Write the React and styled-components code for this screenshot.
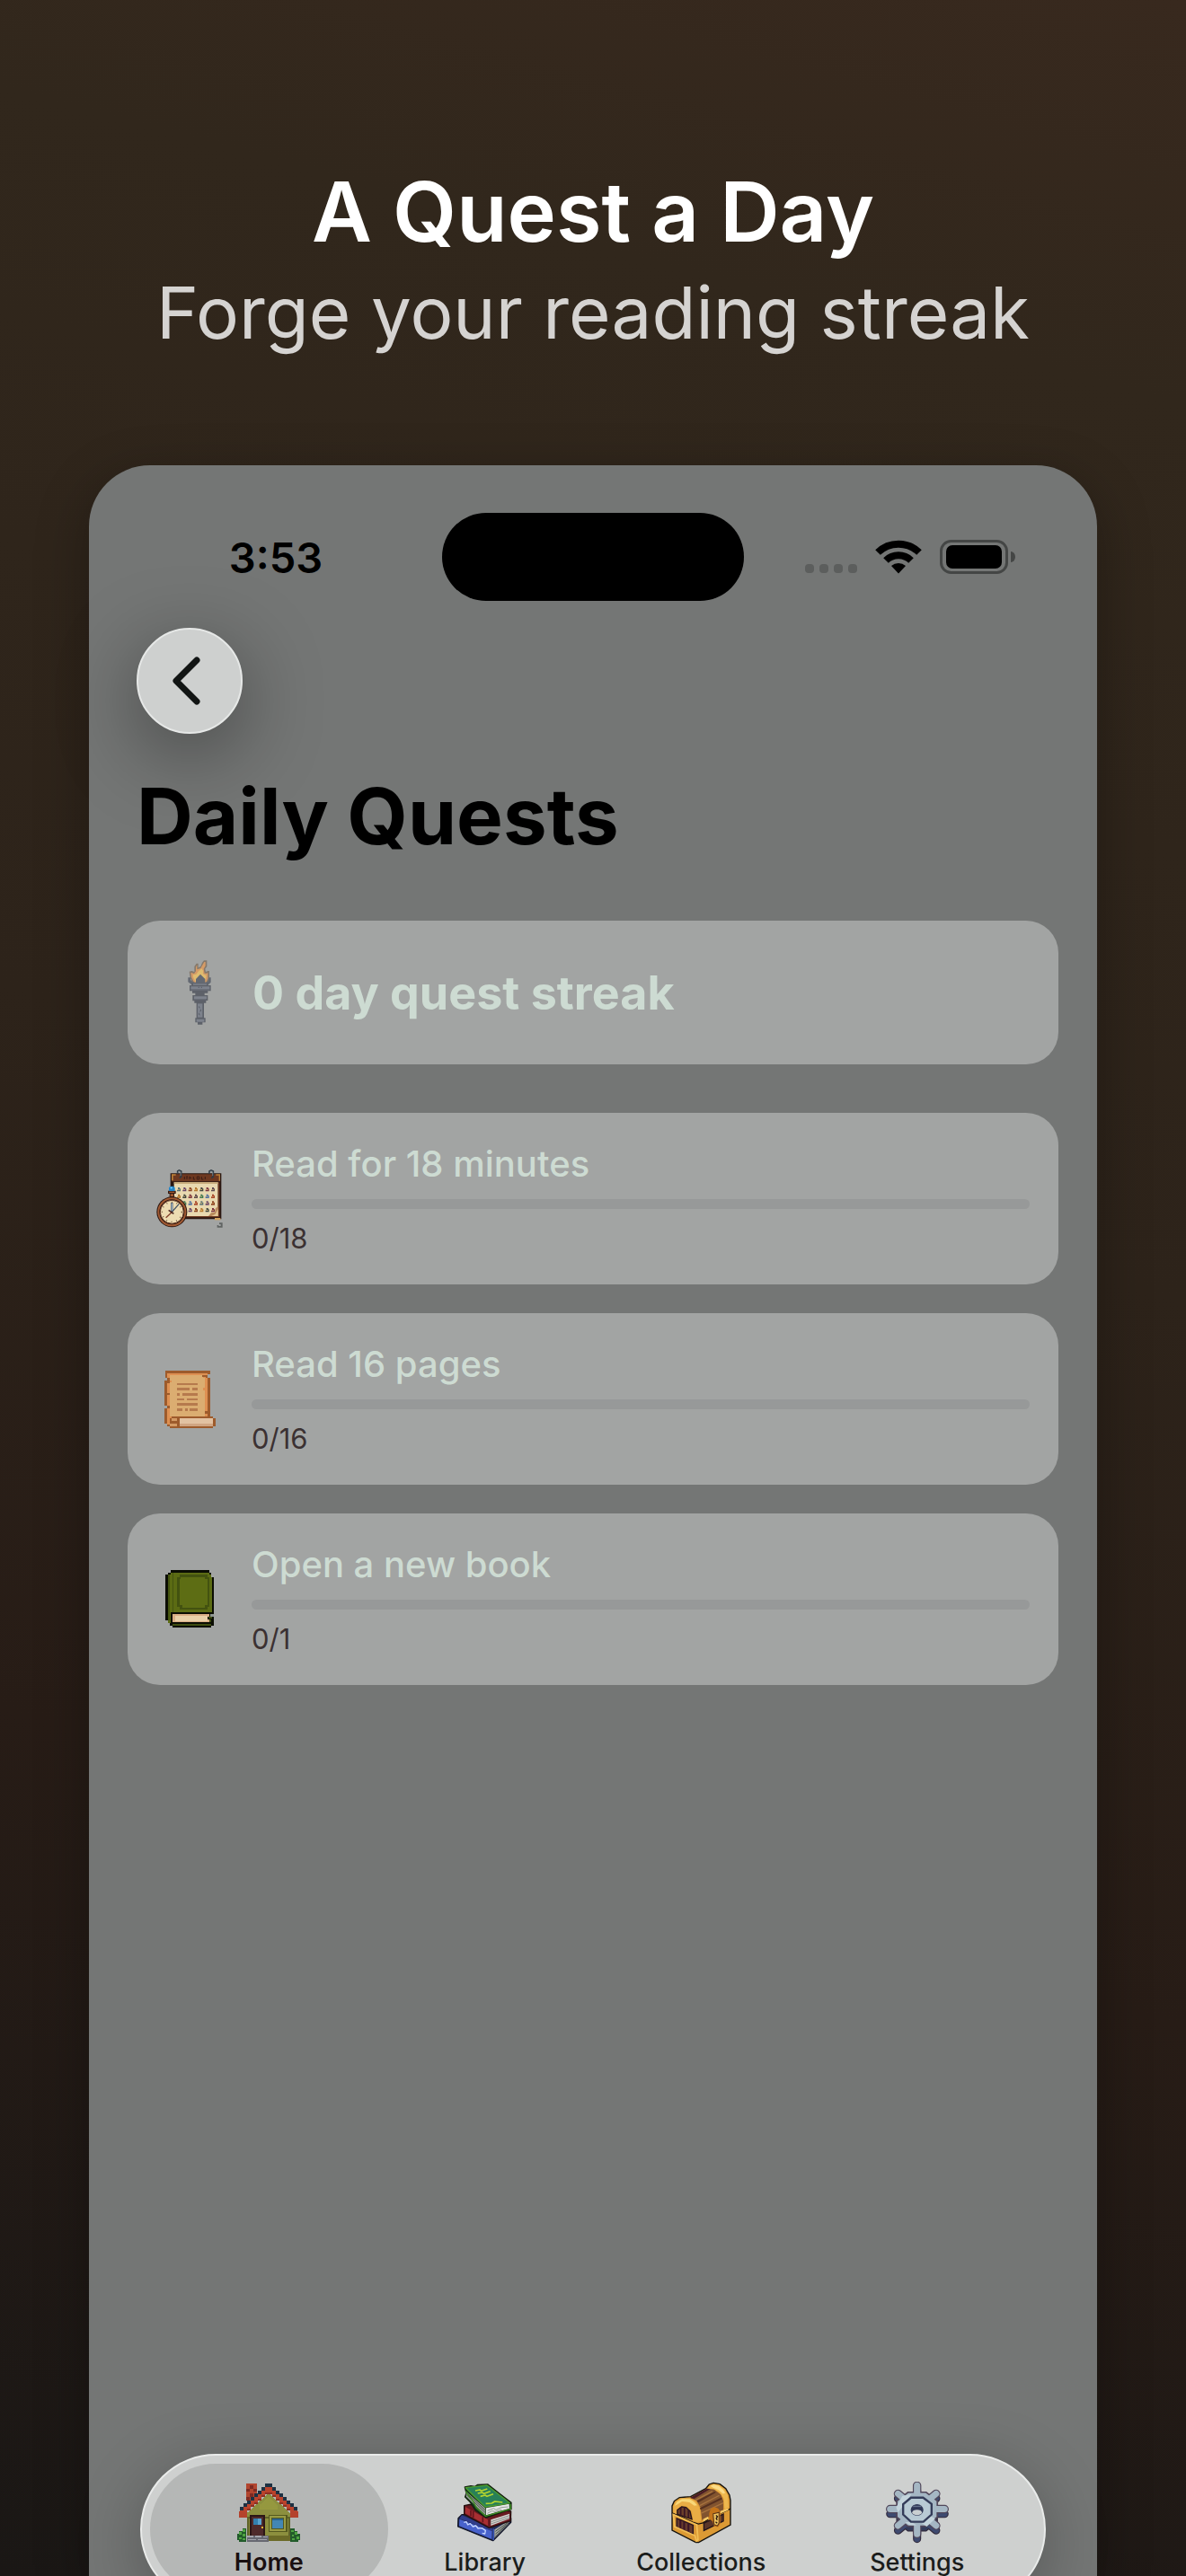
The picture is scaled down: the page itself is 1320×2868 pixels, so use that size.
import styled, { createGlobalStyle } from 'styled-components';

const quests = [
    { id: 'minutes', title: 'Read for 18 minutes', goal: 18, icon: CalendarIcon },
    { id: 'pages', title: 'Read 16 pages', goal: 16, icon: ScrollIcon },
    { id: 'book', title: 'Open a new book', goal: 1, icon: BookIcon },
];

const tabs = [
    { id: 'home', label: 'Home', icon: HouseIcon },
    { id: 'library', label: 'Library', icon: BooksIcon },
    { id: 'collections', label: 'Collections', icon: ChestIcon },
    { id: 'settings', label: 'Settings', icon: GearIcon },
];

const App = () => {
    return (
        <Page>
            <GlobalStyle />
            <Hero>
                <HeroTitle>A Quest a Day</HeroTitle>
                <HeroSubtitle>Forge your reading streak</HeroSubtitle>
            </Hero>
            <Phone>
                <StatusBar>
                    <Time>3:53</Time>
                    <Island />
                    <StatusIcons>
                        <SignalIcon />
                        <WifiIcon />
                        <BatteryIcon />
                    </StatusIcons>
                </StatusBar>
                <BackButton type="button" aria-label="Back">
                    <svg width="32" height="54" viewBox="0 0 32 54">
                        <path
                            d="M28 4 L5 27 L28 50"
                            fill="none"
                            stroke="#121514"
                            strokeWidth="7"
                            strokeLinecap="round"
                            strokeLinejoin="round"
                        />
                    </svg>
                </BackButton>
                <ScreenTitle>Daily Quests</ScreenTitle>
                <StreakCard>
                    <IconBox>
                        <TorchIcon />
                    </IconBox>
                    <StreakText>0 day quest streak</StreakText>
                </StreakCard>
                <QuestList>
                    {quests.map(({ id, title, goal, icon: Icon }) => (
                        <QuestCard key={id}>
                            <IconBox>
                                <Icon />
                            </IconBox>
                            <QuestBody>
                                <QuestTitle htmlFor={id}>{title}</QuestTitle>
                                <QuestProgress id={id} value={0} max={goal} />
                                <QuestCount>0/{goal}</QuestCount>
                            </QuestBody>
                        </QuestCard>
                    ))}
                </QuestList>
                <TabBar>
                    {tabs.map(({ id, label, icon: Icon }) => (
                        <Tab key={id} href={`#${id}`} $active={id === 'home'}>
                            <TabIcon>
                                <Icon />
                            </TabIcon>
                            {label}
                        </Tab>
                    ))}
                </TabBar>
            </Phone>
        </Page>
    );
};

export default App;

function SignalIcon() {
    return (
        <svg width="58" height="38" viewBox="0 0 58 38" fill="#5c5e5d">
            {[0, 16, 32, 48].map((x) => (
                <rect key={x} x={x} y="27" width="10" height="10" rx="4" />
            ))}
        </svg>
    );
}

function WifiIcon() {
    return (
        <svg width="52" height="38" viewBox="0 0 52 38">
            <g fill="none" stroke="#000" strokeWidth="8">
                <path d="M3 14 A33 33 0 0 1 49 14" />
                <path d="M12 23 A20 20 0 0 1 40 23" />
            </g>
            <path d="M18 29 A12 12 0 0 1 34 29 L26 37.500 Z" />
        </svg>
    );
}

function BatteryIcon() {
    return (
        <svg width="84" height="38" viewBox="0 0 84 38">
            <rect x="1.500" y="1.500" width="73" height="35" rx="11" fill="none" stroke="#444645" strokeWidth="3" />
            <rect x="7" y="6" width="62" height="26" rx="7" />
            <path d="M79 13 A5 6 0 0 1 79 25 Z" fill="#444645" />
        </svg>
    );
}

function TorchIcon() {
    return (
        <svg width="26" height="72" viewBox="83 59 78 216">
            <path
                d="M137 60 H147 V80 L141 88 L143 98 L150 95 H155 V120 L150 136 H100 L91 118 L88 97 L96 95 L105 98 V80 L112 70 H118 V84 L126 80 L131 67 Z"
                fill="#85796c"
            />
            <path
                d="M138 65 H142 V78 L136 88 L139 103 H146 L150 101 V120 L144 133 H104 L95 116 L93 100 L104 104 L110 96 V82 L114 75 V90 L126 86 L133 73 Z"
                fill="#d59b66"
            />
            <path d="M129 87 L134 94 V105 L145 111 L140 132 H109 L101 115 V108 L111 106 L119 96 Z" fill="#dfbc70" />
            <path d="M84 117 H92 V125 L100 132 L110 134 L110 122 L125 106 L141 122 V134 L151 130 L154 117 H160 V133 L150 142 H98 L84 132 Z" fill="#646972" />
            <path d="M96 136 H150 V143 H160 V162 H150 V169 H139 V176 H150 V194 H144 V202 H137 V252 H142 V267 H132 V274 H116 V267 H108 V252 H112 V202 H105 V195 H99 V176 H108 V169 H98 V162 H89 V143 H96 Z" fill="#5d6169" />
            <g fill="#7d828c">
                <path d="M101 138 H146 V142 H101 Z M93 147 H156 V157 H93 Z M104 180 H146 V188 H104 Z M112 256 H138 V265 H112 Z" />
                <path d="M116 204 H132 V250 H116 Z" />
            </g>
            <path d="M95 156 H154 V160 H95 Z M104 188 H145 V192 H104 Z" fill="#696e77" />
            <path d="M118 148 H122 V151 H118 Z M127 148 H131 V151 H127 Z M119 212 L123 216 V220 L119 216 Z M128 222 L124 228 V232 L128 228 Z M119 234 L123 240 V244 L119 240 Z" fill="#565b64" />
        </svg>
    );
}

function CalendarIcon() {
    const colors = ['#5d7476', '#68466b', '#8b4424', '#b57a33', '#3f4540', '#7a3340', '#5c4a52', '#3f7a55', '#4c6fa5', '#a8472f'];
    const cells = [];
    for (let row = 0; row < 4; row++) {
        for (let col = 0; col < 7; col++) {
            cells.push({ x: 114 + col * 19, y: 158 + row * 23, color: colors[(row * 3 + col) % colors.length] });
        }
    }

    return (
        <svg width="74" height="66" viewBox="45 98 222 198">
            <path d="M92 111 H262 V264 H130 V200 H92 Z" fill="#2a1712" />
            <path d="M96 114 H258 V138 H96 Z" fill="#6d3820" />
            <path d="M96 114 H110 V118 H101 V135 H96 Z M244 114 H258 V136 H254 V118 H244 Z" fill="#bb8038" />
            <path
                d="M139 122 V131 M145 122 H150 M147 122 V131 M156 131 V122 L162 128 M169 122 V131 H174 M181 122 H188 V131 H181 Z M196 122 V131 H202 M208 122 V131"
                fill="none"
                stroke="#3b1d16"
                strokeWidth="3"
            />
            <path d="M104 141 H251 V254 H104 Z" fill="#e9d9b0" />
            <path d="M251 141 H256 V258 H140 V254 H251 Z" fill="#6d3820" />
            <path d="M104 141 H251 V146 H104 Z" fill="#c9ab7a" />
            {cells.map((cell) => (
                <g key={`${cell.x}-${cell.y}`} fill={cell.color}>
                    <path d={`M${cell.x + 3} ${cell.y} h6 v4 h3 v9 h-12 v-5 h3 Z`} />
                    <path d={`M${cell.x + 4} ${cell.y + 6} h4 v3 h-4 Z`} fill="#e2b868" />
                </g>
            ))}
            <path d="M251 220 V254 H219 L228 243 L240 241 L242 229 Z" fill="#b98a5d" />
            <path d="M251 231 V254 H229 L242 247 Z" fill="#e3c797" />
            <path d="M240 260 H259 V267 H240 Z" fill="#d3a360" />
            <g fill="none" stroke="#303c45" strokeWidth="5">
                <path d="M116 112 V104 L121 101 L128 104 V122 L122 127" />
                <path d="M222 112 V104 L228 101 L235 104 V122 L229 127" />
            </g>
            <g fill="none" stroke="#8999a2" strokeWidth="2">
                <path d="M117 108 L121 103 L126 108 V119 M224 108 L228 103 L233 108 V119" />
            </g>
            <path d="M84 169 H110 V179 H105 V190 H89 V179 H84 Z" fill="#341b13" />
            <path d="M88 172 H106 V176 H88 Z M92 180 H102 V188 H92 Z" fill="#a1592f" />
            <path d="M92 154 H102 L107 159 V170 H87 V159 Z" fill="#2385c8" />
            <path d="M92 157 H98 V162 H92 Z" fill="#7ed3ff" />
            <circle cx="97" cy="240" r="51" fill="#2b1711" />
            <circle cx="97" cy="240" r="45" fill="none" stroke="#a25a32" strokeWidth="6" />
            <circle cx="97" cy="240" r="39" fill="#eddcb2" stroke="#5b2f1e" strokeWidth="3" />
            <circle cx="97" cy="240" r="33" fill="none" stroke="#6d5037" strokeWidth="4" strokeDasharray="3 14" />
            <path d="M97 240 V209" stroke="#45566a" strokeWidth="7" />
            <path d="M97 236 V211" stroke="#a9c2d3" strokeWidth="3" />
            <path d="M97 240 L121 213" stroke="#405061" strokeWidth="4" />
            <path d="M98 240 L77 259" stroke="#82402b" strokeWidth="4" />
            <path d="M86 234 L103 246" stroke="#4b2620" strokeWidth="5" />
            <path d="M255 276 H266 V292 H248 V284 H253 V287 H260 V281 H255 Z" fill="#606463" />
        </svg>
    );
}

function ScrollIcon() {
    return (
        <svg width="57" height="66" viewBox="67 106 171 198" shapeRendering="crispEdges">
            <path d="M69 108 H220 V122 H212 V132 H220 V262 H228 V268 H237 V294 H228 V302 H84 V294 H76 V286 H68 V236 H76 V226 H68 V141 H76 V132 H69 Z" fill="#9d5b2c" />
            <path d="M76 117 H212 V124 H204 V132 H212 V262 H92 V270 H84 V290 H76 V236 H84 V226 H76 V150 H84 V132 H76 Z" fill="#de9052" />
            <path d="M84 125 H195 V132 H203 V262 H84 V236 H84 V226 H84 V149 H92 V141 H84 Z" fill="#dbad71" />
            <path d="M194 124 H210 V131 H194 Z M76 183 H84 V191 H76 Z M203 244 H212 V252 H203 Z" fill="#9d5b2c" />
            <path d="M195 167 H203 V174 H195 Z" fill="#de9052" />
            <path
                d="M109 150 H177 V158 H109 Z M109 167 H152 V175 H109 Z M160 167 H177 V175 H160 Z M109 184 H118 V192 H109 Z M126 184 H177 V192 H126 Z M109 201 H134 V209 H109 Z M143 201 H177 V209 H143 Z M109 218 H177 V226 H109 Z M109 235 H127 V243 H109 Z M135 235 H144 V243 H135 Z M152 235 H177 V243 H152 Z"
                fill="#b67a4d"
            />
            <path d="M92 261 H228 V268 H118 V294 H110 V286 H92 V278 H84 V268 H92 Z" fill="#9d5b2c" />
            <path d="M92 269 H109 V277 H92 Z M84 286 H109 V294 H84 Z" fill="#d39a64" />
            <path d="M118 268 H229 V294 H118 Z" fill="#e2c2a2" />
            <path d="M118 287 H229 V294 H118 Z" fill="#d0a582" />
        </svg>
    );
}

function BookIcon() {
    return (
        <svg width="54" height="65" viewBox="69 82 162 195" shapeRendering="crispEdges">
            <path d="M86 83 H216 V91 H223 V106 H231 V267 H223 V275 H93 V267 H85 V259 H77 V251 H70 V98 H78 V91 H86 Z" fill="#0b0d03" />
            <path d="M86 90 H215 V98 H221 V106 H224 V222 H86 V258 H78 V98 H86 Z" fill="#5b6b13" />
            <path d="M78 98 H84 V250 H78 Z M93 92 H97 V222 H93 Z" fill="#445310" />
            <path d="M117 98 H209 V106 H216 V206 H209 V213 H117 V206 H109 V106 H117 Z" fill="#435210" />
            <path d="M119 105 H202 V113 H210 V199 H202 V207 H125 V199 H116 V113 H119 Z" fill="#5d6d14" />
            <path d="M93 230 H216 V238 H210 V246 H216 V255 H93 Z" fill="#d9ad84" />
            <path d="M101 236 H210 V252 H101 Z" fill="#e9d0a8" />
            <path d="M218 230 H231 V237 H218 Z" fill="#8e9590" />
            <path d="M212 239 H224 V245 H212 Z M93 261 H223 V268 H93 Z M216 246 H223 V256 H216 Z" fill="#3e4c0f" />
        </svg>
    );
}

function HouseIcon() {
    const steps = [0, 1, 2, 3, 4, 5, 6, 7];
    return (
        <svg width="70" height="65" viewBox="71 60 211 195" shapeRendering="crispEdges">
            <path d="M102 61 H138 V118 H102 Z" fill="#b2452f" />
            <path d="M114 66 H126 V77 H114 Z M102 77 H114 V88 H102 Z M126 77 H138 V88 H126 Z M114 94 H126 V105 H114 Z M102 105 H114 V116 H102 Z" fill="#7e2a22" />
            <path d="M176 92 L250 160 V252 H103 V160 Z" fill="#8c8f3e" />
            <path d="M176 104 L206 132 V148 H146 V132 Z" fill="#95983f" />
            <path d="M103 172 H250 V178 H103 Z M244 172 H250 V240 H244 Z M103 172 H109 V235 H103 Z" fill="#5f6329" />
            <path d="M170 234 H250 V252 H170 Z" fill="#6b6a27" />
            {steps.map((k) => (
                <g key={k}>
                    <path d={`M${164 - k * 12} ${73 + k * 11} h12 v22 h-12 Z M${176 + k * 12} ${73 + k * 11} h12 v22 h-12 Z`} fill="#b9432c" />
                    <path d={`M${164 - k * 12} ${89 + k * 11} h12 v6 h-12 Z M${176 + k * 12} ${89 + k * 11} h12 v6 h-12 Z`} fill="#8c3023" />
                    <path d={`M${164 - k * 12} ${61 + k * 11} h12 v12 h-12 Z M${176 + k * 12} ${61 + k * 11} h12 v12 h-12 Z`} fill="#1d3143" />
                </g>
            ))}
            <path d="M77 154 H103 V174 H77 Z M250 154 H275 V174 H250 Z" fill="#b4422d" />
            <path d="M114 164 H164 V236 H114 Z" fill="#2c1717" />
            <path d="M119 171 H159 V233 H119 Z" fill="#4e2a2b" />
            <path d="M126 176 H151 V199 H126 Z" fill="#337fae" />
            <path d="M139 176 H151 V199 H139 Z" fill="#58a3cf" />
            <path d="M153 203 H158 V210 H153 Z" fill="#f0b22f" />
            <path d="M175 164 H239 V222 H175 Z" fill="#55591f" />
            <path d="M179 168 H235 V218 H179 Z" fill="#989b45" />
            <path d="M185 173 H229 V214 H185 Z" fill="#53591f" />
            <path d="M188 176 H226 V211 H188 Z" fill="#4387b4" />
            <path d="M188 176 H226 V184 H188 Z" fill="#2a6390" />
            <path d="M103 233 H175 V254 H103 Z" fill="#676871" />
            <path d="M105 235 H125 V240 H105 Z M130 235 H152 V240 H130 Z M157 236 H172 V241 H157 Z M108 246 H134 V250 H108 Z M140 246 H170 V250 H140 Z" fill="#a3a4ac" />
            <path d="M80 218 H88 V211 H102 V254 H76 V248 H71 V227 H76 V218 Z M250 211 H264 V218 H274 V227 H281 V248 H276 V254 H250 Z" fill="#225b2b" />
            <path d="M90 214 H98 V222 H90 Z M78 222 H87 V231 H78 Z M89 228 H98 V236 H89 Z M76 239 H85 V247 H76 Z M90 243 H98 V250 H90 Z M253 215 H261 V223 H253 Z M265 222 H273 V231 H265 Z M254 230 H262 V238 H254 Z M269 238 H278 V246 H269 Z M256 244 H265 V250 H256 Z" fill="#4fa541" />
        </svg>
    );
}

function BooksIcon() {
    return (
        <svg width="61" height="65" viewBox="805 62 183 195">
            <g strokeLinejoin="round">
                <path d="M808 178 L820 166 L856 166 L984 178 L984 192 L924 253 L807 206 Z" fill="#202b59" stroke="#111426" strokeWidth="4" />
                <path d="M812 181 L921 221 L920 248 L811 204 Z" fill="#4862cc" />
                <path d="M820 168 L924 214 L922 221 L812 179 Z" fill="#303c8b" />
                <path d="M827 192 L835 190 L840 200 L848 196 L857 206 L867 203 L874 212 L887 211 L899 219 L897 230 L888 228" fill="none" stroke="#c7d6ff" strokeWidth="4" />
                <path d="M929 216 L980 184 L976 197 L929 244 Z" fill="#a6aaa4" />
                <path d="M932 222 L978 189 M932 231 L976 194 M931 240 L972 199" stroke="#484f4c" strokeWidth="3" />
                <path d="M924 216 L928 212 L928 250 L923 252 Z" fill="#3753b2" />
                <path d="M828 136 L846 132 L984 155 L983 187 L911 210 L828 165 Z" fill="#681a21" stroke="#23110f" strokeWidth="4" />
                <path d="M832 140 L907 183 L907 203 L831 162 Z" fill="#a82f32" />
                <path d="M850 151 V171 M858 155 V176 M890 174 V192" stroke="#64151d" strokeWidth="5" />
                <path d="M917 183 L979 163 L979 180 L917 203 Z" fill="#d3d4d0" />
                <path d="M917 190 L979 169 M917 197 L979 176" stroke="#8b8d8b" strokeWidth="3" />
                <path d="M830 74 L850 70 L864 72 L873 66 L907 65 L944 94 L985 126 V148 L900 176 L865 151 L846 122 L831 107 L835 94 Z" fill="#173e1e" stroke="#13200f" strokeWidth="4" />
                <path d="M834 89 L899 145 L899 168 L835 106 Z" fill="#9da59c" />
                <path d="M836 94 L898 151 M836 100 L898 159" stroke="#4a524a" strokeWidth="3" />
                <path d="M901 144 L978 130 L979 145 L901 168 Z" fill="#e5e7e4" />
                <path d="M906 153 L926 145 L934 150 L952 142 L975 140 M905 162 L920 154 L933 156 L953 149" fill="none" stroke="#969d98" strokeWidth="3" />
                <path d="M833 76 L868 72 L904 68 L980 127 L952 132 L898 140 Z" fill="#288058" stroke="#4d9e30" strokeWidth="4" />
                <path d="M865 86 L880 83 L885 87 L905 80 M873 95 L888 92 L894 96 L915 88 M882 105 L898 101 L904 105 L925 97 M900 129 L920 128 L930 122 L956 125" fill="none" stroke="#b8d62e" strokeWidth="5" />
                <path d="M833 88 L844 104 L858 122 L868 142 L899 171 L983 147 V131" fill="none" stroke="#428d25" strokeWidth="4" />
            </g>
        </svg>
    );
}

function ChestIcon() {
    return (
        <svg width="67" height="69" viewBox="255 157 195 208" preserveAspectRatio="none">
            <path
                d="M258 320 V238 L265 222 L282 210 L318 207 L367 180 L378 166 L392 161 L413 165 L432 180 L444 202 L447 220 V302 L344 361 H335 Z"
                fill="#dc9a34"
                stroke="#15120d"
                strokeWidth="4"
            />
            <path d="M316 211 L370 180 L395 183 L416 201 L424 222 V254 L355 286 L350 244 L337 220 Z" fill="#82542f" />
            <path d="M316 211 L370 180 L382 181 L329 214 Z" fill="#4a1d26" />
            <path d="M338 221 L396 190 L400 193 L343 227 Z M348 245 L418 210 L420 216 L350 251 Z" fill="#56301f" />
            <path d="M334 219 L389 189 M346 238 L411 203 M352 263 L424 228" stroke="#a8733e" strokeWidth="4" />
            <path d="M262 256 V240 L270 223 L286 213 H318 L335 224 L348 247 L352 288 L340 294 L326 288 L322 258 L307 241 L289 238 L276 249 L273 267 L262 263 Z" fill="#e9ad45" />
            <path d="M266 238 L274 224 L290 215 H315 L329 224 L339 236 L330 238 L314 226 L290 223 L276 233 Z" fill="#f8d778" />
            <path d="M379 171 L392 165 L411 169 L427 182 L438 202 L441 243 L428 250 L425 213 L413 194 L392 181 L373 179 Z" fill="#eeb84f" />
            <path d="M382 171 L393 167 L409 171 L423 183 L430 195 L423 198 L409 185 L392 178 Z" fill="#fbdc88" />
            <path d="M275 267 V252 L289 241 L303 243 L316 256 L322 283 Z" fill="#6c402a" stroke="#22131a" strokeWidth="4" />
            <path d="M286 242 V272 M298 242 V276 M311 252 V280" stroke="#391524" strokeWidth="5" />
            <path d="M273 280 L326 303 V333 L273 310 Z" fill="#663b2c" stroke="#281420" strokeWidth="4" />
            <path d="M285 286 V314 M297 291 V319 M311 298 V325" stroke="#3b1426" strokeWidth="6" />
            <path d="M258 262 L325 293 L343 299 L358 295 L375 284 M415 263 L447 248" fill="none" stroke="#17110d" strokeWidth="4" />
            <path d="M262 267 L338 302 L342 352 L337 356 L332 338 L266 308 Z" fill="none" stroke="#f3bf56" strokeWidth="5" />
            <path d="M361 296 L424 266 V289 L361 321 Z" fill="#5b3628" stroke="#23141b" strokeWidth="4" />
            <path d="M359 282 L375 274 V282 L359 291 Z M414 256 L440 246 V253 L414 264 Z" fill="#f8cb67" />
            <path d="M378 263 L383 248 L394 242 L407 247 L414 257 V298 L407 309 L394 307 L389 290 L378 283 Z" fill="#c47419" />
            <path d="M391 265 L410 260 V296 L405 305 L394 301 Z" fill="#efc25d" stroke="#573318" strokeWidth="3" />
            <path d="M400 270 L405 274 L401 280 L404 286 M399 292 L404 296" fill="none" stroke="#25170f" strokeWidth="4" />
        </svg>
    );
}

function GearIcon() {
    const teeth = 'M1050 171 V332 M961 249 H1141 M987 198 L1113 304 M1113 198 L987 304';
    const body = 'M1020 193 H1080 L1117 222 V276 L1080 306 H1020 L983 276 V222 Z';
    return (
        <svg width="70" height="69" viewBox="947 158 208 206" preserveAspectRatio="none">
            <g transform="translate(0 16)" strokeLinecap="round">
                <path d={teeth} stroke="#332c3e" strokeWidth="27" />
                <path d={body} fill="#343c5b" stroke="#332c3e" strokeWidth="4" />
                <path d={teeth} stroke="#3e4a70" strokeWidth="20" />
            </g>
            <g strokeLinecap="round">
                <path d={teeth} stroke="#51475a" strokeWidth="28" />
                <path d={body} fill="#a5b7c4" stroke="#51475a" strokeWidth="5" />
                <path d={teeth} stroke="#a5b7c4" strokeWidth="21" />
            </g>
            <path d="M1001 206 L1032 199 L1004 238 L987 260 L981 243 Z M1010 292 L1025 302 L1048 303 L1032 292 Z M1066 296 L1091 270 L1110 281 L1082 307 Z" fill="#c4d4dc" />
            <path d="M1030 211 H1070 L1098 232 V267 L1071 291 H1030 L1004 267 V233 Z" fill="#b8cad4" stroke="#343c59" strokeWidth="7" />
            <ellipse cx="1050" cy="252" rx="21" ry="19" fill="#2f3857" />
            <ellipse cx="1050" cy="260" rx="16" ry="9" fill="#c9cfd1" />
            <path d="M1037 240 H1064" stroke="#65728d" strokeWidth="4" />
        </svg>
    );
}

const GlobalStyle = createGlobalStyle`
    * {
        box-sizing: border-box;
    }

    body {
        margin: 0;
        font-family: Inter, 'Liberation Sans', sans-serif;
    }

    svg {
        display: block;
        flex-shrink: 0;
    }
`;

const Page = styled.div`
    display: flex;
    flex-direction: column;
    min-height: 100vh;
    overflow: hidden;
    background: linear-gradient(195deg, #38291e 0%, #31271c 14%, #2d231a 45%, #271c16 70%, #1a1715 100%);
`;

const Hero = styled.header`
    padding: 180px 40px 114px;
    text-align: center;
`;

const HeroTitle = styled.h1`
    margin: 0;
    color: #fff;
    font-size: 92px;
    font-weight: 600;
    line-height: 112px;
`;

const HeroSubtitle = styled.p`
    margin: 0;
    color: #d5d3d1;
    font-size: 80px;
    font-weight: 400;
    line-height: 112px;
`;

const Phone = styled.main`
    flex: 1;
    display: flex;
    flex-direction: column;
    margin: 0 99px;
    padding: 53px 43px 0;
    border-radius: 68px 68px 0 0;
    background: #747675;
    box-shadow: 0 16px 60px rgba(0, 0, 0, 0.3);
`;

const StatusBar = styled.div`
    display: grid;
    grid-template-columns: 1fr 336px 1fr;
    align-items: center;
`;

const Time = styled.time`
    padding-right: 20px;
    color: #000;
    font-size: 47px;
    font-weight: 600;
    text-align: center;
`;

const Island = styled.div`
    height: 98px;
    border-radius: 49px;
    background: #000;
`;

const StatusIcons = styled.div`
    display: flex;
    align-items: center;
    justify-content: flex-end;
    gap: 20px;
    padding-right: 48px;
`;

const BackButton = styled.button`
    display: flex;
    align-items: center;
    justify-content: center;
    width: 118px;
    height: 118px;
    margin: 30px 10px 0;
    padding: 0 8px 0 0;
    border: 2px solid #e6e8e7;
    border-radius: 50%;
    background: #ced0cf;
    box-shadow: 0 22px 90px rgba(0, 0, 0, 0.4);
`;

const ScreenTitle = styled.h2`
    margin: 40px 10px 64px;
    color: #000;
    font-size: 87px;
    font-weight: 700;
    line-height: 104px;
`;

const StreakCard = styled.section`
    display: flex;
    align-items: center;
    gap: 22px;
    min-height: 160px;
    padding: 0 43px;
    border-radius: 36px;
    background: #a2a4a3;
`;

const IconBox = styled.div`
    display: flex;
    flex-shrink: 0;
    align-items: center;
    justify-content: center;
    width: 74px;
`;

const StreakText = styled.p`
    margin: 0;
    color: #cddbd2;
    font-size: 52px;
    font-weight: 700;
`;

const QuestList = styled.ul`
    display: flex;
    flex-direction: column;
    gap: 32px;
    margin: 54px 0 0;
    padding: 0;
    list-style: none;
`;

const QuestCard = styled.li`
    display: flex;
    align-items: center;
    gap: 32px;
    padding: 33px 32px;
    border-radius: 36px;
    background: #a2a4a3;
`;

const QuestBody = styled.div`
    display: flex;
    flex: 1;
    flex-direction: column;
    gap: 15px;
`;

const QuestTitle = styled.label`
    color: #cddbd2;
    font-size: 40px;
    font-weight: 500;
    line-height: 48px;
`;

const QuestProgress = styled.progress`
    width: 100%;
    height: 11px;
    border: 0;
    border-radius: 6px;
    background: #979999;
    appearance: none;
    overflow: hidden;

    &::-webkit-progress-bar {
        background: #979999;
    }

    &::-webkit-progress-value {
        background: #cddbd2;
    }
`;

const QuestCount = styled.span`
    color: #3b3132;
    font-size: 31px;
    line-height: 36px;
`;

const TabBar = styled.nav`
    display: flex;
    margin: auto 14px -32px;
    padding: 9px;
    border: 2px solid #e9ebea;
    border-radius: 84px;
    background: #ced0cf;
    box-shadow: 0 16px 70px rgba(0, 0, 0, 0.25);
`;

const Tab = styled.a`
    display: flex;
    flex: 1;
    flex-direction: column;
    align-items: center;
    gap: 6px;
    padding: 20px 0;
    border-radius: 73px;
    background: ${({ $active }) => ($active ? '#b5b7b6' : 'transparent')};
    color: ${({ $active }) => ($active ? '#1a0f10' : '#1b1d1c')};
    font-size: 27px;
    font-weight: ${({ $active }) => ($active ? 600 : 500)};
    line-height: 32px;
    text-decoration: none;

    & + & {
        margin-left: -24px;
    }
`;

const TabIcon = styled.span`
    display: flex;
    align-items: center;
    justify-content: center;
    height: 68px;
`;
